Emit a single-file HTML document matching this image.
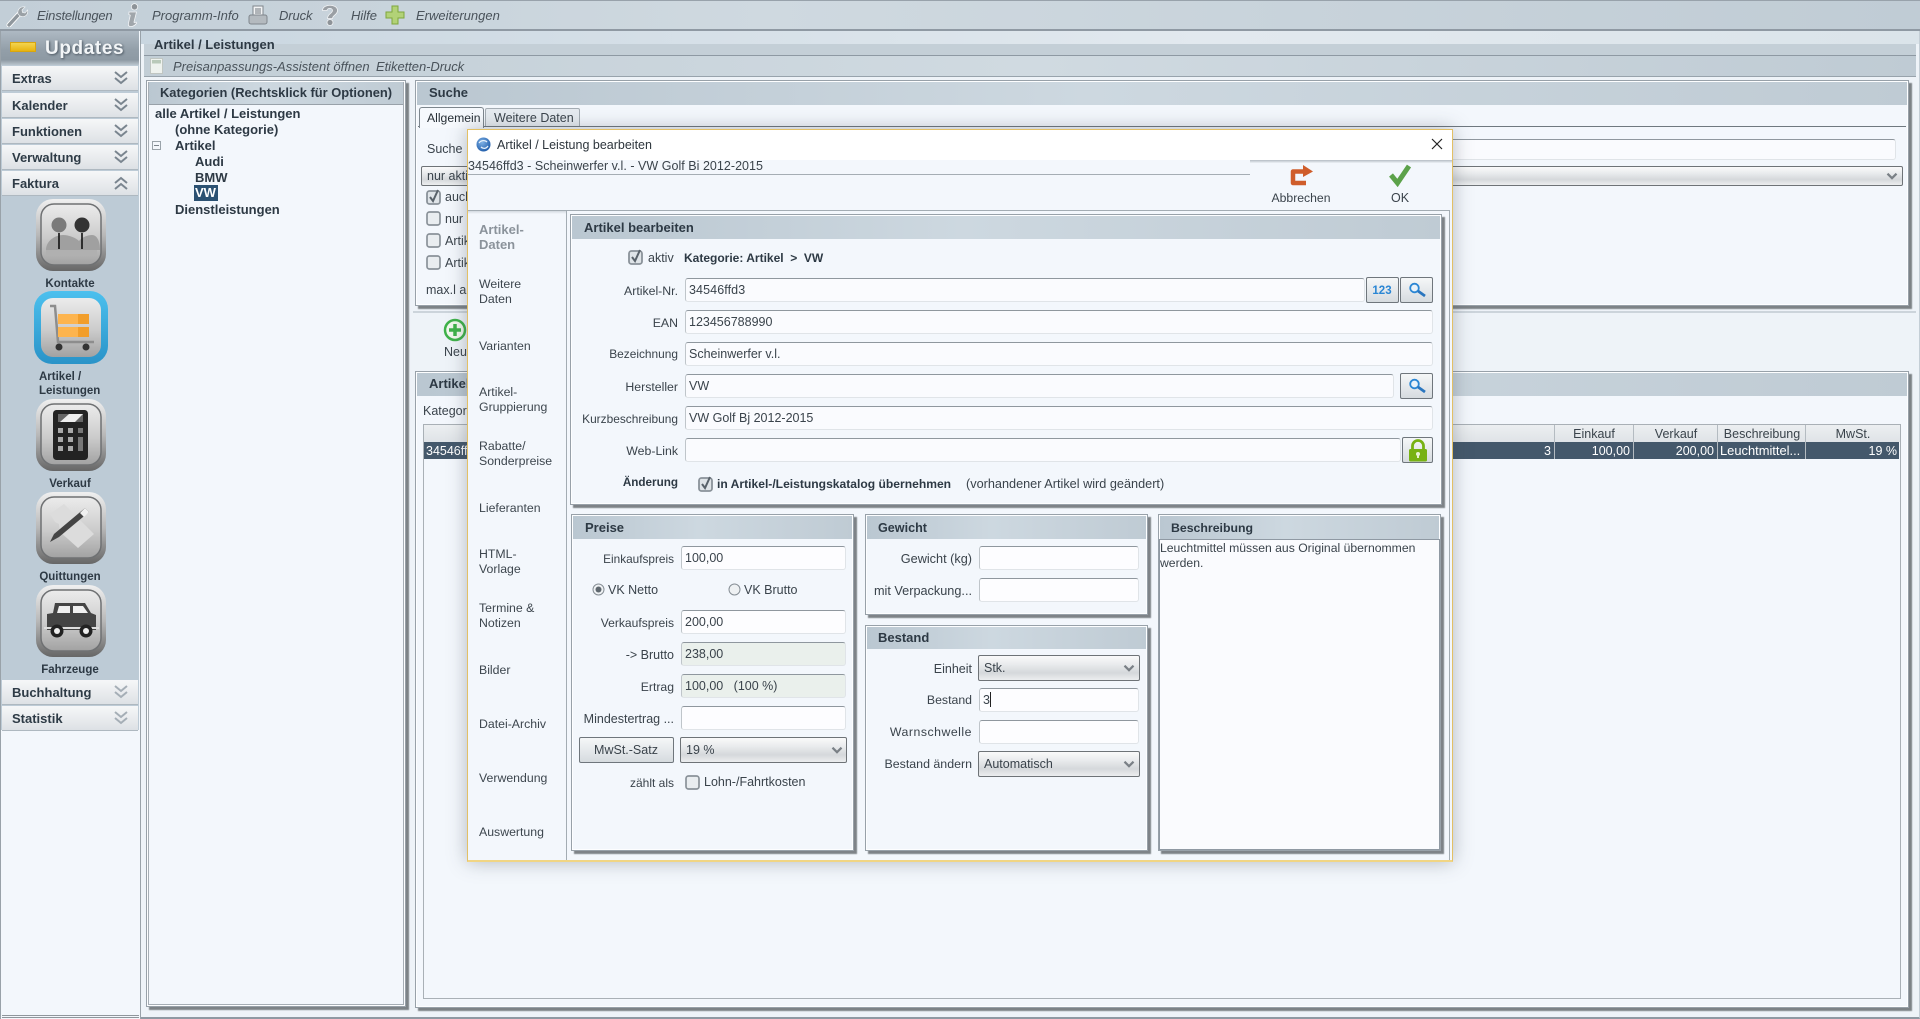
<!DOCTYPE html>
<html lang="de"><head><meta charset="utf-8"><title>Artikel / Leistung bearbeiten</title>
<style>
html,body{margin:0;padding:0;width:1920px;height:1019px;overflow:hidden;background:#eef3f8}
body{position:relative;font-family:"Liberation Sans",Arial,sans-serif;font-size:12.5px;color:#3a434b}
div,svg,span.a{position:absolute;box-sizing:border-box}
.t{position:absolute;white-space:nowrap;line-height:16px;height:16px;margin-top:1px}
.r{transform:translateX(-100%)}
.c{transform:translateX(-50%)}
.b{font-weight:bold;color:#2d3944}
.tr{font-size:13px}
.i{font-style:italic;color:#4a535b;font-size:13px}
.h1{font-weight:bold;font-size:13px;color:#2d3944}
.acc{left:2px;width:136px;height:25px;background:linear-gradient(#f6f7f8,#dde1e5);border-bottom:1px solid #aeb8c0}
.acc span{position:absolute;left:10px;top:5px;font-weight:bold;font-size:13px;line-height:16px;color:#2e3b46}
.acc svg{left:110px;top:3px}
.p{border:1px solid #98a1a9;background:#f3f7fc;box-shadow:inset 0 0 0 1px #fdfeff,3px 3px 1px rgba(105,110,115,.85)}
.h{left:1px;right:1px;top:1px;height:23px;background:linear-gradient(90deg,#bac7d1,#cdd8e0 45%,#bfcbd4)}
.in{height:24px;background:#fafbfe;border:1px solid #e0e4e8;border-top-color:#8f979e;border-left-color:#bfc5ca;border-radius:3px;padding:0 0 0 3px;line-height:22px;white-space:nowrap}
.g{background:#eaf0ec}
.sel{background:linear-gradient(#fafafa,#e9ebed 35%,#d5d8db 70%,#eceeef);border:1px solid #6e7377;border-radius:2px;white-space:nowrap;padding-left:5px;line-height:20px}
.btn{background:linear-gradient(#f5f7f8,#d6dbdf);border:1px solid #6f767c;border-radius:2px}
.nav{left:479px;white-space:nowrap;line-height:15px;color:#3d464e;position:absolute;margin-top:2px;font-size:12.3px}
</style></head><body>
<svg width="0" height="0" style="position:absolute">
<defs>
<linearGradient id="og" x1="0" y1="0" x2="0" y2="1"><stop offset="0" stop-color="#f0f0f0"/><stop offset=".5" stop-color="#b8b8b8"/><stop offset="1" stop-color="#666"/></linearGradient>
<linearGradient id="ig" x1="0" y1="0" x2="0" y2="1"><stop offset="0" stop-color="#ececec"/><stop offset=".55" stop-color="#cbcbcb"/><stop offset="1" stop-color="#a2a2a2"/></linearGradient>
<linearGradient id="bg" x1="0" y1="0" x2="0" y2="1"><stop offset="0" stop-color="#4cc0ee"/><stop offset="1" stop-color="#2a93c8"/></linearGradient>
<radialGradient id="gl" cx=".4" cy=".35" r=".7"><stop offset="0" stop-color="#7fb2e6"/><stop offset="1" stop-color="#1d5aa8"/></radialGradient>
<symbol id="chv" viewBox="0 0 18 18"><path d="M3 3l6 5 6-5M3 9l6 5 6-5" fill="none" stroke="#7a858f" stroke-width="2"/></symbol>
<symbol id="chu" viewBox="0 0 18 18"><path d="M3 9l6-5 6 5M3 15l6-5 6 5" fill="none" stroke="#7a858f" stroke-width="2"/></symbol>
<symbol id="chl" viewBox="0 0 18 18"><path d="M3 3l6 5 6-5M3 9l6 5 6-5" fill="none" stroke="#a5aeb6" stroke-width="2"/></symbol>
<symbol id="sc" viewBox="0 0 12 8"><path d="M2 1.5l4 4 4-4" fill="none" stroke="#7a8086" stroke-width="2"/></symbol>
<symbol id="cb" viewBox="0 0 15 15"><rect x="1" y="1" width="13" height="13" rx="2.5" fill="#e9edf0" stroke="#8a9299" stroke-width="1.7"/></symbol>
<symbol id="cc" viewBox="0 0 15 17"><rect x="1" y="3" width="13" height="13" rx="2.5" fill="#dfe4e8" stroke="#8a9299" stroke-width="1.8"/><path d="M4 9l3 4 5-11" fill="none" stroke="#59626a" stroke-width="2"/></symbol>
<symbol id="mag" viewBox="0 0 22 16"><circle cx="7.5" cy="6" r="4.3" fill="#e8f2fa" stroke="#2a86d4" stroke-width="1.8"/><path d="M11 9l7 5" stroke="#2a76bf" stroke-width="2.8"/></symbol>
<symbol id="btn" viewBox="0 0 70 72" preserveAspectRatio="none"><rect x="0" y="0" width="70" height="72" rx="17" fill="url(#og)"/><rect x="5" y="5" width="60" height="61" rx="13" fill="url(#ig)" stroke="#6f7173" stroke-width="1.5"/></symbol>
</defs></svg>

<!-- top toolbar -->
<div style="left:0;top:0;width:1920px;height:31px;background:linear-gradient(90deg,#c2ced7,#cfd9e0 40%,#c0ccd5);border-top:1px solid #98a2ab;border-bottom:2px solid #8f99a3"></div>
<svg style="left:6px;top:4px" width="22" height="23" viewBox="0 0 22 23"><path d="M3 21L14 9" stroke="#fff" stroke-width="5" stroke-linecap="round"/><path d="M3 21L14 9" stroke="#8f979d" stroke-width="3.4" stroke-linecap="round"/><path d="M12 10c-1-4 2-8 7-7l-3 3 .5 2.5L19 9l2.500-3c1 5-3 8-7.500 6z" fill="#9aa1a6" stroke="#f0f3f5" stroke-width=".7"/></svg>
<div class="t i" style="left:37px;top:7px;letter-spacing:-.2px">Einstellungen</div>
<svg style="left:124px;top:3px" width="16" height="24" viewBox="0 0 16 24"><circle cx="10.500" cy="3.800" r="3.200" fill="#8d9398" stroke="#f2f4f6" stroke-width=".8"/><path d="M5 9h7.500l-2.500 10c0 1 1 1 2 0l.7 1c-1.500 2.300-3.200 3.500-5.700 3.500-2.200 0-3-1-2.500-3.300l1.800-8-1.500-.7z" fill="#a0a6ab" stroke="#f2f4f6" stroke-width=".8"/></svg>
<div class="t i" style="left:152px;top:7px">Programm-Info</div>
<svg style="left:248px;top:5px" width="20" height="20" viewBox="0 0 20 20"><rect x="5" y="1" width="10" height="10" fill="#f2f3f4" stroke="#7f868c"/><path d="M7 4h6M7 6h6M7 8h6" stroke="#6f767c"/><rect x="1" y="10" width="18" height="9" rx="2" fill="#b4babf" stroke="#7f868c"/></svg>
<div class="t i" style="left:279px;top:7px;letter-spacing:-.1px">Druck</div>
<svg style="left:321px;top:4px" width="18" height="22" viewBox="0 0 18 22"><path d="M1.500 6.500c0-7 15-7 15 0 0 4.500-5 4.500-5 8H6.500c0-5 5-5 5-8 0-2.800-5.500-2.800-5.500 0z" fill="#9a9fa4" stroke="#f2f4f6" stroke-width=".8"/><circle cx="9" cy="18.500" r="3" fill="#8e9398" stroke="#f2f4f6" stroke-width=".8"/></svg>
<div class="t i" style="left:351px;top:7px">Hilfe</div>
<svg style="left:385px;top:5px" width="20" height="20" viewBox="0 0 20 20"><path d="M7 1h6v6h6v6h-6v6H7v-6H1V7h6z" fill="#b2d277" stroke="#7fa73c"/></svg>
<div class="t i" style="left:416px;top:7px">Erweiterungen</div>

<!-- sidebar -->
<div style="left:0;top:31px;width:141px;height:988px;background:#f3f7fc;border-left:1px solid #99a2a9;border-right:1px solid #99a2a9"></div>
<div style="left:2px;top:1015px;width:137px;height:3px;border-top:1px solid #8f969c;border-bottom:1px solid #8f969c"></div>
<div style="left:1px;top:31px;width:138px;height:34px;background:linear-gradient(#aeb9c3,#939fa9 55%,#8d99a3 85%,#b9c4cd)"></div>
<div style="left:10px;top:42px;width:26px;height:10px;background:linear-gradient(#f3d44f,#e8b410);border:1px solid #d9a60e"></div>
<div class="t" style="left:45px;top:37px;height:22px;line-height:22px;font-size:19px;font-weight:bold;color:#f2f5f7;letter-spacing:.6px;text-shadow:1px 1px 2px #4b5661">Updates</div>
<div style="left:1px;top:65px;width:138px;height:665px;background:#bdcbd6"></div>
<div class="acc" style="top:66px"><span>Extras</span><svg width="18" height="18"><use href="#chv"/></svg></div>
<div class="acc" style="top:93px"><span>Kalender</span><svg width="18" height="18"><use href="#chv"/></svg></div>
<div class="acc" style="top:119px"><span>Funktionen</span><svg width="18" height="18"><use href="#chv"/></svg></div>
<div class="acc" style="top:145px"><span>Verwaltung</span><svg width="18" height="18"><use href="#chv"/></svg></div>
<div class="acc" style="top:171px"><span>Faktura</span><svg width="18" height="18"><use href="#chu"/></svg></div>

<!-- app buttons -->
<svg style="left:36px;top:199px" width="70" height="72" viewBox="0 0 70 72"><use href="#btn" width="70" height="72"/>
<path d="M10 51c0-9 9-15 17-15 6 0 13 3 16 6 3-4 9-6 13-6 5 0 8 6 8 15z" fill="#a0a0a0"/><rect x="10" y="51" width="51" height="5" fill="#b0b0b0"/><circle cx="23" cy="26" r="7.500" fill="#7a7a7a"/><circle cx="46" cy="26" r="7.500" fill="#333"/><path d="M23 34v16M46 34v16" stroke="#111" stroke-width="1.600"/></svg>
<div class="t b c" style="left:70px;top:275px;font-size:11.5px">Kontakte</div>
<svg style="left:34px;top:291px" width="74" height="73" viewBox="0 0 74 73"><rect x="0" y="0" width="74" height="73" rx="18" fill="url(#bg)"/><rect x="7" y="7" width="60" height="59" rx="12" fill="url(#ig)"/><path d="M16 15h5l3 36h36" fill="none" stroke="#8d8d8d" stroke-width="2.500"/><rect x="24" y="23" width="31" height="10" fill="#f29e2b"/><rect x="24" y="23" width="20" height="10" fill="#fdb44e"/><rect x="24" y="36" width="31" height="10" fill="#f29e2b"/><rect x="24" y="36" width="20" height="10" fill="#fdb44e"/><circle cx="25" cy="56" r="3.500" fill="#333"/><circle cx="52" cy="56" r="3.500" fill="#333"/></svg>
<div class="t b" style="left:39px;top:368px;font-size:11.5px">Artikel /</div>
<div class="t b" style="left:39px;top:382px;font-size:11.5px">Leistungen</div>
<svg style="left:36px;top:399px" width="70" height="72" viewBox="0 0 70 72"><use href="#btn" width="70" height="72"/><rect x="17" y="11" width="35" height="50" rx="3.500" fill="#232323"/><path d="M22 15h25v8H22z" fill="#666"/><path d="M24 23l9-8h14l-8 8z" fill="#eee"/><g fill="#aaa"><rect x="22" y="29" width="5" height="5"/><rect x="32" y="29" width="5" height="5"/><rect x="42" y="29" width="5" height="5" fill="#777"/><rect x="22" y="38" width="5" height="5"/><rect x="32" y="38" width="5" height="5"/><rect x="22" y="47" width="5" height="5"/><rect x="32" y="47" width="5" height="5"/><rect x="42" y="38" width="5" height="14" fill="#777"/></g></svg>
<div class="t b c" style="left:70px;top:475px;font-size:11.5px">Verkauf</div>
<svg style="left:36px;top:492px" width="70" height="72" viewBox="0 0 70 72"><use href="#btn" width="70" height="72"/><path d="M14 22l14-10 30 30-16 14-10-9-8-7-1-8-4-2z" fill="#dcdcdc"/><path d="M49 16l4 4-30 25-9 5 4-8z" fill="#444"/><path d="M49 16l4 4-5 5-4-4z" fill="#f0f0f0"/></svg>
<div class="t b c" style="left:70px;top:568px;font-size:11.5px">Quittungen</div>
<svg style="left:36px;top:585px" width="70" height="72" viewBox="0 0 70 72"><use href="#btn" width="70" height="72"/><path d="M11 45V29l6-1 2-10h30l6 10 5 2v15z" fill="#444"/><path d="M21 28l2-7h11v7zM37 21h10l5 7H37z" fill="#efefef"/><rect x="8" y="42" width="55" height="2" fill="#ddd"/><circle cx="21" cy="46" r="6.500" fill="#222"/><circle cx="21" cy="46" r="3" fill="#eee"/><circle cx="50" cy="46" r="6.500" fill="#222"/><circle cx="50" cy="46" r="3" fill="#eee"/></svg>
<div class="t b c" style="left:70px;top:661px;font-size:11.5px">Fahrzeuge</div>
<div class="acc" style="top:680px"><span>Buchhaltung</span><svg width="18" height="18"><use href="#chl"/></svg></div>
<div class="acc" style="top:706px"><span>Statistik</span><svg width="18" height="18"><use href="#chl"/></svg></div>

<!-- main header -->
<div style="left:141px;top:31px;width:1779px;height:988px;background:#eef3f8;border-right:1px solid #c4ced6;border-bottom:2px solid #8f99a3"></div>
<div style="left:141px;top:31px;width:1778px;height:13px;background:linear-gradient(90deg,#c9d6e0,#e2e9ef 60%,#dbe4ea)"></div>
<div style="left:144px;top:44px;width:1772px;height:12px;background:#c4cfd7;border-bottom:1px solid #8e99a3"></div>
<div style="left:144px;top:56px;width:1772px;height:21px;background:linear-gradient(90deg,#c2ced6,#d0dae1 50%,#bfcbd4);border-bottom:1px solid #98a3ac"></div>
<div class="t" style="left:154px;top:36px;font-weight:bold;font-size:13px;color:#2d3944">Artikel / Leistungen</div>
<svg style="left:150px;top:58px" width="13" height="16" viewBox="0 0 13 16"><rect x=".5" y=".5" width="12" height="15" fill="#eef2ee" stroke="#c0c6c2"/><rect x="2" y="2" width="9" height="3.500" fill="#b9c9b9"/></svg>
<div class="t i" style="left:173px;top:58px">Preisanpassungs-Assistent öffnen</div>
<div class="t i" style="left:376px;top:58px;letter-spacing:-.05px">Etiketten-Druck</div>

<!-- Kategorien -->
<div class="p" style="left:146px;top:80px;width:260px;height:927px"><div class="h"></div></div>
<div style="left:148px;top:104px;width:255px;height:1px;background:#98a1a9"></div>
<div style="left:148px;top:82px;width:1px;height:922px;background:#a6aeb5"></div>
<div style="left:403px;top:82px;width:1px;height:922px;background:#a6aeb5"></div>
<div style="left:148px;top:1004px;width:256px;height:1px;background:#a6aeb5"></div>
<div class="t h1" style="left:160px;top:84px;font-size:12.9px">Kategorien (Rechtsklick für Optionen)</div>
<div class="t b tr" style="left:155px;top:105px">alle Artikel / Leistungen</div>
<div class="t b tr" style="left:175px;top:121px">(ohne Kategorie)</div>
<div style="left:152px;top:141px;width:9px;height:9px;border:1px solid #9aa3aa;background:#f3f7fc"></div><div style="left:154px;top:145px;width:5px;height:1px;background:#7c858d"></div>
<div class="t b tr" style="left:175px;top:137px">Artikel</div>
<div class="t b tr" style="left:195px;top:153px">Audi</div>
<div class="t b tr" style="left:195px;top:169px">BMW</div>
<div style="left:194px;top:185px;width:24px;height:16px;background:#2b5172"></div>
<div class="t b tr" style="left:195px;top:184px;color:#fff">VW</div>
<div class="t b tr" style="left:175px;top:201px">Dienstleistungen</div>

<!-- Suche -->
<div class="p" style="left:415px;top:80px;width:1494px;height:226px"><div class="h"></div></div>
<div class="t h1" style="left:429px;top:84px">Suche</div>
<div style="left:418px;top:126px;width:1488px;height:2px;border-top:1px solid #6f787f"></div>
<div style="left:419px;top:107px;width:65px;height:21px;background:#f6f9fd;border:1px solid #7d868d;border-bottom:none;border-radius:3px 3px 0 0"></div>
<div class="t" style="left:427px;top:109px;color:#262e35;font-size:12.2px">Allgemein</div>
<div style="left:485px;top:108px;width:95px;height:18px;background:#e6ebf0;border:1px solid #a5adb4;border-bottom:none;border-radius:2px 2px 0 0"></div>
<div class="t" style="left:494px;top:109px">Weitere Daten</div>
<div class="t" style="left:427px;top:140px">Suche</div>
<div class="in" style="left:640px;top:139px;width:1256px;height:21px"></div>
<div class="sel" style="left:421px;top:166px;width:1482px;height:20px;line-height:18px">nur aktive</div>
<svg style="left:1885px;top:172px" width="14" height="9"><use href="#sc"/></svg>
<svg style="left:426px;top:188px" width="15" height="17"><use href="#cc"/></svg><div class="t" style="left:445px;top:188px">auch</div>
<svg style="left:426px;top:211px" width="15" height="15"><use href="#cb"/></svg><div class="t" style="left:445px;top:210px">nur</div>
<svg style="left:426px;top:233px" width="15" height="15"><use href="#cb"/></svg><div class="t" style="left:445px;top:232px">Artikel</div>
<svg style="left:426px;top:255px" width="15" height="15"><use href="#cb"/></svg><div class="t" style="left:445px;top:254px">Artikel</div>
<div class="t" style="left:426px;top:281px">max.l auf</div>

<div style="left:413px;top:311px;width:1503px;height:2px;background:#ccd4db"></div>
<svg style="left:443px;top:318px" width="24" height="24" viewBox="0 0 24 24"><circle cx="12" cy="12" r="10" fill="#f2f8ee" stroke="#3fb24a" stroke-width="2.500"/><path d="M12 6v12M6 12h12" stroke="#3fb24a" stroke-width="3.500"/></svg>
<div class="t" style="left:444px;top:343px">Neu</div>

<!-- Artikel list -->
<div class="p" style="left:415px;top:371px;width:1494px;height:637px"><div class="h"></div></div>
<div class="t h1" style="left:429px;top:375px">Artikel</div>
<div class="t" style="left:423px;top:402px">Kategorie</div>
<div style="left:423px;top:424px;width:1478px;height:575px;background:#f3f7fc;border:1px solid #a9b0b6"></div>
<div style="left:424px;top:425px;width:1476px;height:17px;background:linear-gradient(#eceff1,#dfe3e7)"></div>
<div style="left:424px;top:442px;width:1475px;height:17px;background:#44586b"></div>
<div style="left:1554px;top:425px;width:1px;height:34px;background:#b4bbc1"></div>
<div style="left:1633px;top:425px;width:1px;height:34px;background:#b4bbc1"></div>
<div style="left:1717px;top:425px;width:1px;height:34px;background:#b4bbc1"></div>
<div style="left:1805px;top:425px;width:1px;height:34px;background:#b4bbc1"></div>
<div class="t c" style="left:1594px;top:425px">Einkauf</div>
<div class="t c" style="left:1676px;top:425px">Verkauf</div>
<div class="t c" style="left:1762px;top:425px">Beschreibung</div>
<div class="t c" style="left:1853px;top:425px">MwSt.</div>
<div class="t" style="left:426px;top:442px;color:#fff">34546ffd3</div>
<div class="t r" style="left:1551px;top:442px;color:#fff">3</div>
<div class="t r" style="left:1630px;top:442px;color:#fff">100,00</div>
<div class="t r" style="left:1714px;top:442px;color:#fff">200,00</div>
<div class="t" style="left:1720px;top:442px;color:#fff;font-size:12.9px">Leuchtmittel...</div>
<div class="t r" style="left:1897px;top:442px;color:#fff">19 %</div>

<!-- MODAL -->
<div style="left:467px;top:129px;width:986px;height:733px;background:#f3f7fc;border:1px solid #e3c065;border-bottom:2px solid #f1d584;box-shadow:0 0 18px rgba(60,70,80,.35)"></div>
<div style="left:468px;top:130px;width:984px;height:30px;background:#fff"></div>
<svg style="left:476px;top:137px" width="15" height="15" viewBox="0 0 15 15"><circle cx="7.500" cy="7.500" r="7" fill="url(#gl)"/><path d="M3 6c2-3 6-3 8-1M12 9c-2 3-5 3-7 1" fill="none" stroke="#e6f0fa" stroke-width="1.300"/></svg>
<div class="t" style="left:497px;top:136px;color:#2d353c">Artikel / Leistung bearbeiten</div>
<svg style="left:1431px;top:138px" width="12" height="12" viewBox="0 0 12 12"><path d="M1 1l10 10M11 1L1 11" stroke="#222" stroke-width="1.200"/></svg>
<div class="t" style="left:468px;top:157px;color:#3a434b;font-size:12.5px;letter-spacing:.03px">34546ffd3 - Scheinwerfer v.l. - VW Golf Bi 2012-2015</div>
<div style="left:468px;top:174px;width:782px;height:1px;background:#a5adb4"></div>
<div style="left:1250px;top:160px;width:202px;height:3px;background:linear-gradient(#b5bcc3,#eef2f6)"></div>
<svg style="left:1288px;top:162px" width="26" height="26" viewBox="0 0 26 26"><path d="M18 21H5V9.500h12" fill="none" stroke="#cf5d2b" stroke-width="4.500" stroke-linejoin="round"/><path d="M15 3l10 6.500L15 15z" fill="#cf5d2b"/></svg>
<div class="t c" style="left:1301px;top:189px;font-size:12.2px">Abbrechen</div>
<svg style="left:1388px;top:163px" width="24" height="24" viewBox="0 0 24 24"><path d="M3 12l6.500 8L21 3" fill="none" stroke="#5ca24a" stroke-width="5"/></svg>
<div class="t c" style="left:1400px;top:189px">OK</div>
<div style="left:468px;top:210px;width:981px;height:1px;background:#a3acb3"></div>
<div style="left:468px;top:211px;width:98px;height:3px;background:linear-gradient(#d3d9df,#f3f7fc)"></div>
<div style="left:566px;top:210px;width:1px;height:650px;background:#a3acb3"></div>
<div style="left:1449px;top:210px;width:1px;height:650px;background:#a3acb3"></div>

<!-- modal nav -->
<div class="nav" style="top:220px;font-weight:bold;color:#8b939b;font-size:13px">Artikel-<br>Daten</div>
<div class="nav" style="top:275px">Weitere<br>Daten</div>
<div class="nav" style="top:337px">Varianten</div>
<div class="nav" style="top:383px">Artikel-<br>Gruppierung</div>
<div class="nav" style="top:437px">Rabatte/<br>Sonderpreise</div>
<div class="nav" style="top:499px">Lieferanten</div>
<div class="nav" style="top:545px">HTML-<br>Vorlage</div>
<div class="nav" style="top:599px">Termine &amp;<br>Notizen</div>
<div class="nav" style="top:661px">Bilder</div>
<div class="nav" style="top:715px">Datei-Archiv</div>
<div class="nav" style="top:769px">Verwendung</div>
<div class="nav" style="top:823px">Auswertung</div>

<!-- Artikel bearbeiten -->
<div class="p" style="left:570px;top:214px;width:872px;height:291px"><div class="h"></div></div>
<div class="t h1" style="left:584px;top:219px">Artikel bearbeiten</div>
<svg style="left:628px;top:248px" width="15" height="17"><use href="#cc"/></svg>
<div class="t" style="left:648px;top:249px">aktiv</div>
<div class="t b" style="left:684px;top:249px;font-size:12px">Kategorie: Artikel &nbsp;&gt;&nbsp; VW</div>
<div class="t r" style="left:678px;top:282px;font-size:12.3px">Artikel-Nr.</div>
<div class="in" style="left:685px;top:278px;width:680px;letter-spacing:.1px">34546ffd3</div>
<div class="btn" style="left:1366px;top:277px;width:33px;height:26px"></div>
<div class="t c" style="left:1382px;top:282px;font-weight:bold;font-size:11.5px;color:#2a86d4">123</div>
<div class="btn" style="left:1400px;top:277px;width:33px;height:26px"></div>
<svg style="left:1407px;top:282px" width="22" height="16"><use href="#mag"/></svg>
<div class="t r" style="left:678px;top:314px;font-size:12.3px">EAN</div>
<div class="in" style="left:685px;top:310px;width:748px">123456788990</div>
<div class="t r" style="left:678px;top:345px;font-size:11.9px">Bezeichnung</div>
<div class="in" style="left:685px;top:342px;width:748px">Scheinwerfer v.l.</div>
<div class="t r" style="left:678px;top:378px;font-size:12.3px">Hersteller</div>
<div class="in" style="left:685px;top:374px;width:709px">VW</div>
<div class="btn" style="left:1400px;top:373px;width:33px;height:26px"></div>
<svg style="left:1407px;top:378px" width="22" height="16"><use href="#mag"/></svg>
<div class="t r" style="left:678px;top:410px;font-size:11.9px">Kurzbeschreibung</div>
<div class="in" style="left:685px;top:406px;width:748px">VW Golf Bj 2012-2015</div>
<div class="t r" style="left:678px;top:442px;font-size:12.3px">Web-Link</div>
<div class="in" style="left:685px;top:438px;width:716px"></div>
<div class="btn" style="left:1402px;top:437px;width:31px;height:26px"></div>
<svg style="left:1408px;top:439px" width="20" height="23" viewBox="0 0 20 23"><path d="M4.500 11V7a5.500 5.500 0 0 1 11 0v4" fill="none" stroke="#78b214" stroke-width="2.800"/><rect x="1" y="10" width="18" height="12.500" rx="1.500" fill="#78b214"/><circle cx="10" cy="15" r="2" fill="#e8f2d4"/><rect x="9" y="15" width="2" height="4" fill="#e8f2d4"/></svg>
<div class="t b r" style="left:678px;top:474px;font-size:11.7px">Änderung</div>
<svg style="left:698px;top:475px" width="15" height="17"><use href="#cc"/></svg>
<div class="t b" style="left:717px;top:475px;font-size:12.1px">in Artikel-/Leistungskatalog übernehmen</div>
<div class="t" style="left:966px;top:475px;font-size:12.7px">(vorhandener Artikel wird geändert)</div>

<!-- Preise -->
<div class="p" style="left:571px;top:514px;width:283px;height:337px"><div class="h"></div></div>
<div class="t h1" style="left:585px;top:519px">Preise</div>
<div class="t r" style="left:674px;top:550px;font-size:11.8px">Einkaufspreis</div>
<div class="in" style="left:681px;top:546px;width:165px;background:#fdfdff">100,00</div>
<svg style="left:592px;top:583px" width="13" height="13" viewBox="0 0 13 13"><circle cx="6.500" cy="6.500" r="5.500" fill="#eef1f3" stroke="#868e95"/><circle cx="6.500" cy="6.500" r="3" fill="#5f686f"/></svg>
<div class="t" style="left:608px;top:581px">VK Netto</div>
<svg style="left:728px;top:583px" width="13" height="13" viewBox="0 0 13 13"><circle cx="6.500" cy="6.500" r="5.500" fill="#eef1f3" stroke="#868e95"/></svg>
<div class="t" style="left:744px;top:581px">VK Brutto</div>
<div class="t r" style="left:674px;top:614px;font-size:12.1px">Verkaufspreis</div>
<div class="in" style="left:681px;top:610px;width:165px;background:#fdfdff">200,00</div>
<div class="t r" style="left:674px;top:646px">-&gt; Brutto</div>
<div class="in g" style="left:681px;top:642px;width:165px">238,00</div>
<div class="t r" style="left:674px;top:678px;font-size:12.2px">Ertrag</div>
<div class="in g" style="left:681px;top:674px;width:165px">100,00 &nbsp; (100 %)</div>
<div class="t r" style="left:674px;top:710px">Mindestertrag ...</div>
<div class="in" style="left:681px;top:706px;width:165px;background:#fdfdff"></div>
<div class="btn" style="left:579px;top:737px;width:95px;height:26px"></div>
<div class="t c" style="left:626px;top:741px">MwSt.-Satz</div>
<div class="sel" style="left:680px;top:737px;width:167px;height:26px;line-height:24px">19 %</div>
<svg style="left:830px;top:746px" width="14" height="9"><use href="#sc"/></svg>
<div class="t r" style="left:674px;top:774px;font-size:12px">zählt als</div>
<svg style="left:685px;top:775px" width="15" height="15"><use href="#cb"/></svg>
<div class="t" style="left:704px;top:773px">Lohn-/Fahrtkosten</div>

<!-- Gewicht -->
<div class="p" style="left:865px;top:514px;width:283px;height:101px"><div class="h"></div></div>
<div class="t h1" style="left:878px;top:519px;font-size:12.6px">Gewicht</div>
<div class="t r" style="left:972px;top:550px;font-size:12.7px">Gewicht (kg)</div>
<div class="in" style="left:979px;top:546px;width:160px;background:#fdfdff"></div>
<div class="t r" style="left:972px;top:582px;font-size:12.7px">mit Verpackung...</div>
<div class="in" style="left:979px;top:578px;width:160px;background:#fdfdff"></div>

<!-- Bestand -->
<div class="p" style="left:865px;top:625px;width:283px;height:226px"><div class="h" style="height:22px"></div></div>
<div class="t h1" style="left:878px;top:629px">Bestand</div>
<div class="t r" style="left:972px;top:660px">Einheit</div>
<div class="sel" style="left:978px;top:655px;width:162px;height:26px;line-height:24px">Stk.</div>
<svg style="left:1122px;top:664px" width="14" height="9"><use href="#sc"/></svg>
<div class="t r" style="left:972px;top:691px;font-size:12.3px">Bestand</div>
<div class="in" style="left:979px;top:688px;width:160px;background:#fdfdff">3</div>
<div style="left:990px;top:692px;width:1px;height:15px;background:#222"></div>
<div class="t r" style="left:972px;top:723px;font-size:12.3px;letter-spacing:.5px">Warnschwelle</div>
<div class="in" style="left:979px;top:720px;width:160px;background:#fdfdff"></div>
<div class="t r" style="left:972px;top:755px;font-size:12.4px">Bestand ändern</div>
<div class="sel" style="left:978px;top:751px;width:162px;height:26px;line-height:24px">Automatisch</div>
<svg style="left:1122px;top:760px" width="14" height="9"><use href="#sc"/></svg>

<!-- Beschreibung -->
<div class="p" style="left:1158px;top:514px;width:283px;height:337px"><div class="h"></div></div>
<div class="t h1" style="left:1171px;top:519px;font-size:12.3px">Beschreibung</div>
<div style="left:1159px;top:539px;width:281px;height:311px;background:#fafbfe;border:1px solid #8f99a3"></div>
<div class="t" style="left:1160px;top:540px;line-height:15px;font-size:12.2px">Leuchtmittel müssen aus Original übernommen</div>
<div class="t" style="left:1160px;top:555px;line-height:15px;font-size:12.2px">werden.</div>
</body></html>
